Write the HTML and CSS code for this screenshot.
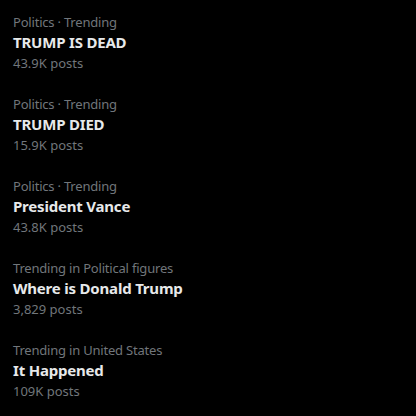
FILE: index.html
```html
<!DOCTYPE html>
<html lang="en">
<head>
    <meta charset="UTF-8">
    <meta name="viewport" content="width=device-width, initial-scale=1.0">
    <title>Trending</title>
    <link rel="stylesheet" href="styles.css">
</head>
<body>
    <div class="trends">
        <div class="trend">
            <div class="trend-meta">Politics · Trending</div>
            <div class="trend-title">TRUMP IS DEAD</div>
            <div class="trend-count">43.9K posts</div>
        </div>
        <div class="trend">
            <div class="trend-meta">Politics · Trending</div>
            <div class="trend-title">TRUMP DIED</div>
            <div class="trend-count">15.9K posts</div>
        </div>
        <div class="trend">
            <div class="trend-meta">Politics · Trending</div>
            <div class="trend-title">President Vance</div>
            <div class="trend-count">43.8K posts</div>
        </div>
        <div class="trend">
            <div class="trend-meta">Trending in Political figures</div>
            <div class="trend-title">Where is Donald Trump</div>
            <div class="trend-count">3,829 posts</div>
        </div>
        <div class="trend">
            <div class="trend-meta">Trending in United States</div>
            <div class="trend-title">It Happened</div>
            <div class="trend-count">109K posts</div>
        </div>
    </div>
</body>
</html>
```

FILE: styles.css
```css
body {
    background-color: #000;
    color: #e7e9ea;
    font-family: 'Noto Sans', 'Liberation Sans', sans-serif;
    margin: 0;
    padding: 0;
    height: 100vh;
}

.trends {
    display: flex;
    flex-direction: column;
    padding: 12px 13px 0;
}

.trend {
    display: flex;
    flex-direction: column;
    height: 82px;
}

.trend-meta {
    color: #71767b;
    font-size: 13px;
    line-height: 20px;
    letter-spacing: -0.2px;
}

.trend-title {
    font-size: 15px;
    font-weight: bold;
    line-height: 20px;
    letter-spacing: -0.2px;
}

.trend-count {
    color: #71767b;
    font-size: 13px;
    line-height: 22px;
}
```
